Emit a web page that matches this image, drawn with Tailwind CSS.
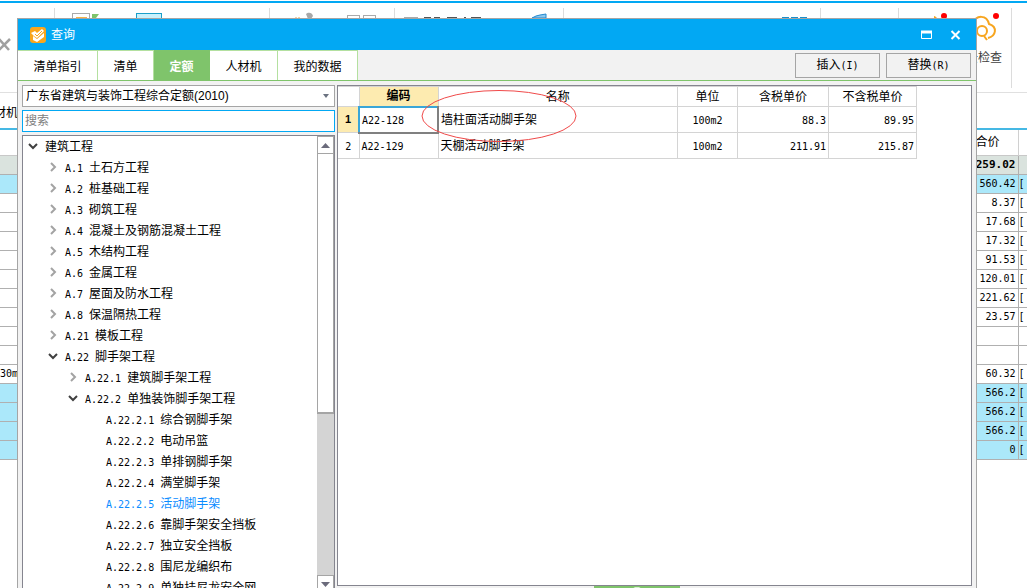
<!DOCTYPE html>
<html lang="zh-CN">
<head>
<meta charset="utf-8">
<title>查询</title>
<script src="https://cdn.jsdelivr.net/npm/@tailwindcss/browser@4"></script>
</head>
<body class="relative h-screen overflow-hidden bg-white pt-px font-['Liberation_Sans','Noto_Sans_CJK_SC',sans-serif] text-xs text-black">
<svg class="hidden">
  <symbol id="closed" viewBox="0 0 16 16"><path d="M6 3l4 4-4 4" fill="none" stroke="#a3a3a3" stroke-width="2"/></symbol>
  <symbol id="open" viewBox="0 0 16 16"><path d="M4 5l4 4 4-4" fill="none" stroke="#404040" stroke-width="2"/></symbol>
</svg>

<!-- main window -->
<main class="overflow-hidden">
  <div class="flex h-[92px] border-t-2 border-b border-t-[#02a8f3] border-b-[#e0e0e0] pt-[5px] pr-[15px]">
    <div class="h-20 w-[55px] border-r border-[#dcdcdc]"><svg class="block h-20 w-[54px]"><path d="M-1 31l10 11M10 31L-1 42" stroke="#a0a0a0" stroke-width="2.5"/></svg></div>
    <div class="h-20 w-[215px] border-r border-[#dcdcdc]"><svg class="block h-20 w-[214px]"><rect x="17.500" y="5.500" width="17" height="14" fill="#fff" stroke="#aaa"/><path d="M21 10h11" stroke="#f5b44a" stroke-width="2"/><path d="M37 6h7l-3 4h-4z" fill="#7fc46b"/><rect x="81.500" y="5.500" width="25" height="20" fill="#c9f1fc" stroke="#1b9fc9"/></svg></div>
    <div class="h-20 w-[125px] border-r border-[#dcdcdc]"><svg class="block h-20 w-[124px]"><path d="M26 9v3M29 9v3" stroke="#e9a547"/><path d="M36 6c2-2 6-2 7 2l-2 3h-3z" fill="#a8a8a8"/><rect x="77.500" y="7.500" width="12" height="12" fill="none" stroke="#aaa"/><rect x="93.500" y="7.500" width="12" height="12" fill="none" stroke="#aaa"/></svg></div>
    <div class="h-20 w-[169px] border-r border-[#dcdcdc]"><svg class="block h-20 w-[168px]"><path d="M9 9.500h14" stroke="#aaa"/><path d="M29 9.500h7M39 9.500h6M52 9.500h10M69 9.500h2M76 9.500h10" stroke="#555"/><path d="M137 10l4-2 4-1 6-1v4z" fill="#8cc8ee" stroke="#2589cf"/></svg></div>
    <div class="h-20 flex-1 border-r border-[#dcdcdc]"><svg class="ml-auto block h-20 w-[50px]"><path d="M12 9.500h7M21 9.500h7M30 9.500h7" stroke="#1b8fc9"/></svg></div>
    <div class="h-20 w-[78px] border-r border-[#dcdcdc]"></div>
    <div class="flex h-20 w-[113px] flex-col items-end border-r border-[#dcdcdc] pr-[9px]">
      <svg class="block h-10 w-[68px]"><circle cx="-1" cy="13" r="4" fill="none" stroke="#f7a51f" stroke-width="2"/><circle cx="10" cy="8" r="3" fill="#f00"/><path d="M40 29c-6-1-8-9-1-13C42 6 53 7 55 16c9 3 7 12-1 14" fill="none" stroke="#f7a51f" stroke-width="2"/><circle cx="48" cy="23" r="5" fill="#fff" stroke="#f7a51f" stroke-width="2"/><path d="M50 28l3 4" stroke="#f7a51f" stroke-width="2"/><circle cx="62" cy="8" r="3" fill="#f00"/></svg>
      <span class="leading-5 text-[#404040]">云检查</span>
    </div>
  </div>
  <div class="flex h-[37px] items-center border-b-2 border-[#45b8e4] pt-1"><div class="flex w-[18px] justify-end"><span class="shrink-0 whitespace-nowrap">人材机</span></div></div>
  <table class="w-full table-fixed border-collapse font-['DejaVu_Sans_Mono','Noto_Sans_CJK_SC',monospace] text-[10px] whitespace-nowrap [&_td]:h-[19px] [&_td]:overflow-hidden [&_td]:border-b [&_td]:border-[#b0b0b0] [&_td]:p-0 [&_td]:leading-4 [&_td:nth-child(2)]:border-r [&_td:nth-child(2)]:pr-0.5 [&_td:nth-child(2)]:text-right">
    <colgroup><col class="w-[60px]"><col><col class="w-[9px]"></colgroup>
    <thead><tr class="h-[25px] border-b border-[#c8c8c8] text-xs"><th></th><th class="border-r border-[#d0d0d0] p-0 pr-[18px] text-right font-normal">合价</th><th></th></tr></thead>
    <tbody>
      <tr class="bg-[#dae3de] font-bold"><td></td><td class="text-[11px]">259.02</td><td></td></tr>
      <tr class="bg-[#abe8fa]"><td></td><td>560.42</td><td>[</td></tr>
      <tr><td></td><td>8.37</td><td>[</td></tr>
      <tr><td></td><td>17.68</td><td>[</td></tr>
      <tr><td></td><td>17.32</td><td>[</td></tr>
      <tr><td></td><td>91.53</td><td>[</td></tr>
      <tr><td></td><td>120.01</td><td>[</td></tr>
      <tr><td></td><td>221.62</td><td>[</td></tr>
      <tr><td></td><td>23.57</td><td>[</td></tr>
      <tr><td></td><td></td><td></td></tr>
      <tr><td></td><td></td><td></td></tr>
      <tr><td>30mm</td><td>60.32</td><td>[</td></tr>
      <tr class="bg-[#abe8fa]"><td></td><td>566.2</td><td>[</td></tr>
      <tr class="bg-[#abe8fa]"><td></td><td>566.2</td><td>[</td></tr>
      <tr class="bg-[#abe8fa]"><td></td><td>566.2</td><td>[</td></tr>
      <tr class="bg-[#abe8fa]"><td></td><td>0</td><td>[</td></tr>
    </tbody>
  </table>
</main>

<!-- query dialog -->
<section role="dialog" aria-labelledby="title" class="absolute top-[18px] right-[50px] -bottom-6 left-[17px] flex flex-col border border-[#a5a5a5] bg-[#f2f2f2] [&_i]:font-['DejaVu_Sans_Mono',monospace] [&_i]:text-[10px] [&_i]:not-italic">
  <header class="flex h-[31px] shrink-0 items-center bg-[#02a8f3] pr-3.5 pl-3 text-white">
    <svg class="h-4 w-4" viewBox="0 0 16 16"><rect width="16" height="16" rx="3" fill="#f9a61c"/><path d="M1 6l4-2 2 2 5-4 2 2-7 7-3-2zM3 9l4 3 7-6v4l-7 5-4-2z" fill="#fff"/><path d="M5 7l2 2 5-5" fill="none" stroke="#f9a61c"/></svg>
    <h1 id="title" class="ml-[5px] flex-1">查询</h1>
    <button aria-label="最大化" class="mr-[17px]"><svg class="block h-3 w-3"><path d="M.5 2.500h10v7H.5z" fill="none" stroke="#fff"/><path d="M0 3h11" stroke="#fff" stroke-width="3"/></svg></button>
    <button aria-label="关闭"><svg class="block h-3 w-3"><path d="M1.500 2l8 8M9.500 2l-8 8" stroke="#fff" stroke-width="2"/></svg></button>
  </header>
  <div class="flex h-[31px] shrink-0 items-stretch border-b border-[#7fc46b]">
    <nav class="flex [&_button]:border-t [&_button]:border-r [&_button]:border-[#b4e0a0] [&_button]:bg-white [&_button]:pt-0.5">
      <button class="w-20">清单指引</button>
      <button class="w-14">清单</button>
      <button class="w-14 !border-[#7fc46b] !bg-[#7fc46b] font-bold text-white">定额</button>
      <button class="w-[68px]">人材机</button>
      <button class="w-20">我的数据</button>
    </nav>
    <div class="ml-auto flex items-center gap-1.5 pr-[5px] [&_button]:h-[25px] [&_button]:w-[85px] [&_button]:border [&_button]:border-[#a5a5a5]">
      <button>插入<i>(I)</i></button>
      <button>替换<i>(R)</i></button>
    </div>
  </div>
  <div class="flex min-h-0 flex-1 gap-0.5 px-1 pt-1">
    <aside class="flex w-[313px] shrink-0 flex-col">
      <div class="relative shrink-0">
        <select aria-label="定额库" class="block h-[22px] w-full appearance-none border border-[#a5a5a5] bg-white px-[3px]"><option>广东省建筑与装饰工程综合定额(2010)</option></select>
        <svg class="pointer-events-none absolute top-[9px] right-[5px] h-1 w-[7px]"><path d="M0 0h6L3 4z" fill="#6b7280"/></svg>
      </div>
      <input aria-label="搜索" placeholder="搜索" class="mt-[3px] h-[22px] shrink-0 border border-[#02a8f3] bg-white px-0.5 outline-none placeholder:text-[#808080]">
      <div class="mt-[3px] flex min-h-0 flex-1 border border-[#85858f] bg-white">
        <ul class="min-w-0 flex-1 overflow-hidden whitespace-nowrap [&_i]:mr-1.5 [&_li]:flex [&_li]:h-[21px] [&_li]:items-center [&_li]:gap-1 [&_svg]:size-4 [&_svg]:shrink-0">
          <li class="pl-0.5"><svg><use href="#open"/></svg><span>建筑工程</span></li>
          <li class="pl-[22px]"><svg><use href="#closed"/></svg><span><i>A.1</i>土石方工程</span></li>
          <li class="pl-[22px]"><svg><use href="#closed"/></svg><span><i>A.2</i>桩基础工程</span></li>
          <li class="pl-[22px]"><svg><use href="#closed"/></svg><span><i>A.3</i>砌筑工程</span></li>
          <li class="pl-[22px]"><svg><use href="#closed"/></svg><span><i>A.4</i>混凝土及钢筋混凝土工程</span></li>
          <li class="pl-[22px]"><svg><use href="#closed"/></svg><span><i>A.5</i>木结构工程</span></li>
          <li class="pl-[22px]"><svg><use href="#closed"/></svg><span><i>A.6</i>金属工程</span></li>
          <li class="pl-[22px]"><svg><use href="#closed"/></svg><span><i>A.7</i>屋面及防水工程</span></li>
          <li class="pl-[22px]"><svg><use href="#closed"/></svg><span><i>A.8</i>保温隔热工程</span></li>
          <li class="pl-[22px]"><svg><use href="#closed"/></svg><span><i>A.21</i>模板工程</span></li>
          <li class="pl-[22px]"><svg><use href="#open"/></svg><span><i>A.22</i>脚手架工程</span></li>
          <li class="pl-[42px]"><svg><use href="#closed"/></svg><span><i>A.22.1</i>建筑脚手架工程</span></li>
          <li class="pl-[42px]"><svg><use href="#open"/></svg><span><i>A.22.2</i>单独装饰脚手架工程</span></li>
          <li class="pl-[83px]"><span><i>A.22.2.1</i>综合钢脚手架</span></li>
          <li class="pl-[83px]"><span><i>A.22.2.2</i>电动吊篮</span></li>
          <li class="pl-[83px]"><span><i>A.22.2.3</i>单排钢脚手架</span></li>
          <li class="pl-[83px]"><span><i>A.22.2.4</i>满堂脚手架</span></li>
          <li class="pl-[83px] text-[#0a8cff]"><span><i>A.22.2.5</i>活动脚手架</span></li>
          <li class="pl-[83px]"><span><i>A.22.2.6</i>靠脚手架安全挡板</span></li>
          <li class="pl-[83px]"><span><i>A.22.2.7</i>独立安全挡板</span></li>
          <li class="pl-[83px]"><span><i>A.22.2.8</i>围尼龙编织布</span></li>
          <li class="pl-[83px]"><span><i>A.22.2.9</i>单独挂尼龙安全网</span></li>
        </ul>
        <div class="flex w-[17px] shrink-0 flex-col bg-[#d4d4d4] pb-[17px]">
          <button aria-label="向上滚动" class="flex h-[18px] shrink-0 items-center justify-center border border-[#a5a5a5] bg-white"><svg class="h-[5px] w-[9px]"><path d="M0 5l4.500-5L9 5z" fill="#6b6b7b"/></svg></button>
          <div class="h-[260px] shrink-0 border border-t-0 border-b-2 border-[#a5a5a5] bg-white"></div>
          <button aria-label="向下滚动" class="mt-auto flex h-[18px] shrink-0 items-center justify-center border border-[#a5a5a5] bg-white"><svg class="h-[5px] w-[9px]"><path d="M0 0h9L4.500 5z" fill="#6b6b7b"/></svg></button>
        </div>
      </div>
    </aside>
    <div class="flex min-w-0 flex-1 flex-col">
      <div class="relative min-h-0 flex-1 border border-[#85858f] bg-white">
        <table class="w-[579px] table-fixed border-collapse [&_td]:border [&_td]:border-t-0 [&_td]:border-[#d4d4d4] [&_td]:px-0.5 [&_td]:py-0 [&_th]:border [&_th]:border-[#d4d4d4] [&_th]:p-0 [&_tr>*:first-child]:border-l-0">
          <colgroup><col class="w-[21px]"><col class="w-[79px]"><col><col class="w-[60px]"><col class="w-[91px]"><col class="w-[88px]"></colgroup>
          <thead><tr class="h-5 [&_th]:font-normal"><th></th><th class="bg-[#fdebb0] !font-bold">编码</th><th>名称</th><th>单位</th><th>含税单价</th><th>不含税单价</th></tr></thead>
          <tbody>
            <tr class="h-[26px]"><th scope="row" class="bg-[#fdebb0] text-[11px]">1</th><td class="!border-2 !border-t-[#3aa6d8] !border-r-[#808080] !border-b-[#808080] !border-l-[#3aa6d8]"><i>A22-128</i></td><td>墙柱面活动脚手架</td><td class="text-center"><i>100m2</i></td><td class="text-right"><i>88.3</i></td><td class="text-right"><i>89.95</i></td></tr>
            <tr class="h-[26px]"><th scope="row" class="font-normal"><i>2</i></th><td><i>A22-129</i></td><td>天棚活动脚手架</td><td class="text-center"><i>100m2</i></td><td class="text-right"><i>211.91</i></td><td class="text-right"><i>215.87</i></td></tr>
          </tbody>
        </table>
        <svg class="pointer-events-none absolute top-[3px] left-[82px] h-[54px] w-[158px]"><ellipse cx="79" cy="27" rx="77" ry="25.500" fill="none" stroke="#f04a4a"/></svg>
      </div>
      <div class="flex h-[25px] shrink-0 justify-center pr-9"><button aria-label="展开" class="w-[86px] bg-[#7fc46b]"><svg class="mx-auto block h-6 w-3"><path d="M1 3l5-3 5 3" fill="none" stroke="#d8f0d0" stroke-width="2"/></svg></button></div>
    </div>
  </div>
</section>
</body>
</html>
